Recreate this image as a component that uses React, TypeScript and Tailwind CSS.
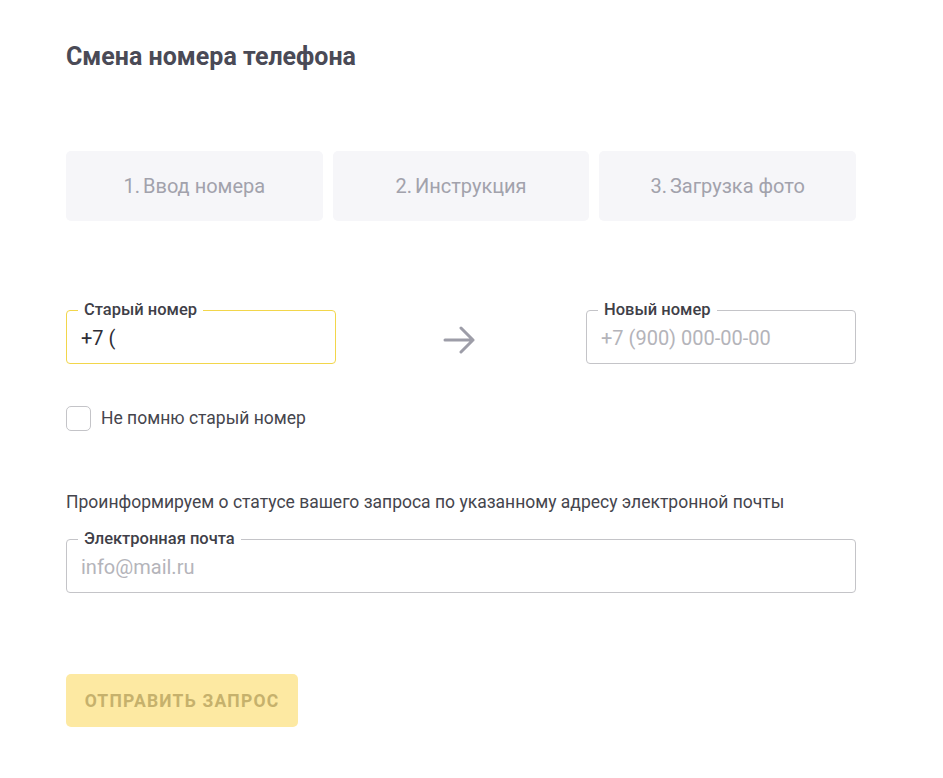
import React from "react";

const font = { fontFamily: "Roboto, 'Liberation Sans', sans-serif" };

function Field({
  label,
  value,
  placeholder,
  active,
  className = "",
}: {
  label: string;
  value?: string;
  placeholder?: string;
  active?: boolean;
  className?: string;
}) {
  return (
    <div
      className={`relative h-[54px] rounded-[4px] border ${
        active ? "border-[#f2d64b]" : "border-[#c4c4c8]"
      } ${className}`}
    >
      <span className="absolute -top-[11px] left-[11px] bg-white px-[6px] text-[16.5px] leading-[20px] font-medium text-[#3f3f48]">
        {label}
      </span>
      <div className="flex h-full items-center pl-[14px] pt-[2px] text-[20px]">
        {value ? (
          <span className="text-[#2e2e36]">{value}</span>
        ) : (
          <span className="text-[#b4b4ba]">{placeholder}</span>
        )}
      </div>
    </div>
  );
}

export default function App() {
  const steps = [
    ["1.", "Ввод номера"],
    ["2.", "Инструкция"],
    ["3.", "Загрузка фото"],
  ];
  return (
    <div className="min-h-[778px] bg-white" style={font}>
      <div className="w-[790px] ml-[66px] pt-[40px]">
        <h1 className="text-[25px] leading-[34px] font-bold text-[#4a4a56]">
          Смена номера телефона
        </h1>

        <div className="mt-[77px] grid grid-cols-3 gap-[10px]">
          {steps.map(([n, s]) => (
            <div
              key={s}
              className="flex h-[70px] items-center justify-center rounded-[5px] bg-[#f6f6f9] text-[20px] text-[#a2a2ac]"
            >
              <span className="mr-[3px]">{n}</span>
              {s}
            </div>
          ))}
        </div>

        <div className="mt-[89px] flex items-center justify-between">
          <Field label="Старый номер" value="+7 (" active className="w-[270px]" />
          <svg
            width="34"
            height="28"
            viewBox="0 0 34 28"
            className="mr-[3px] mt-[6px]"
            fill="none"
            stroke="#9d9da8"
            strokeWidth="3"
            strokeLinecap="round"
            strokeLinejoin="round"
          >
            <path d="M2 14h28M18 2l12 12-12 12" />
          </svg>
          <Field label="Новый номер" placeholder="+7 (900) 000-00-00" className="w-[270px]" />
        </div>

        <label className="mt-[41px] flex items-center gap-[10px]">
          <span className="h-[25px] w-[25px] rounded-[5px] border border-[#c4c4c8] bg-white" />
          <span className="text-[17.5px] text-[#45454d]">Не помню старый номер</span>
        </label>

        <p className="mt-[59px] text-[17.5px] leading-[24px] text-[#45454d]">
          Проинформируем о статусе вашего запроса по указанному адресу электронной почты
        </p>

        <Field
          label="Электронная почта"
          placeholder="info@mail.ru"
          className="mt-[25px] w-full"
        />

        <button className="mt-[81px] h-[53px] w-[232px] rounded-[5px] bg-[#fde9a2] text-[17.5px] font-bold uppercase tracking-[1.2px] text-[#c6b16c]">
          Отправить запрос
        </button>
      </div>
    </div>
  );
}
